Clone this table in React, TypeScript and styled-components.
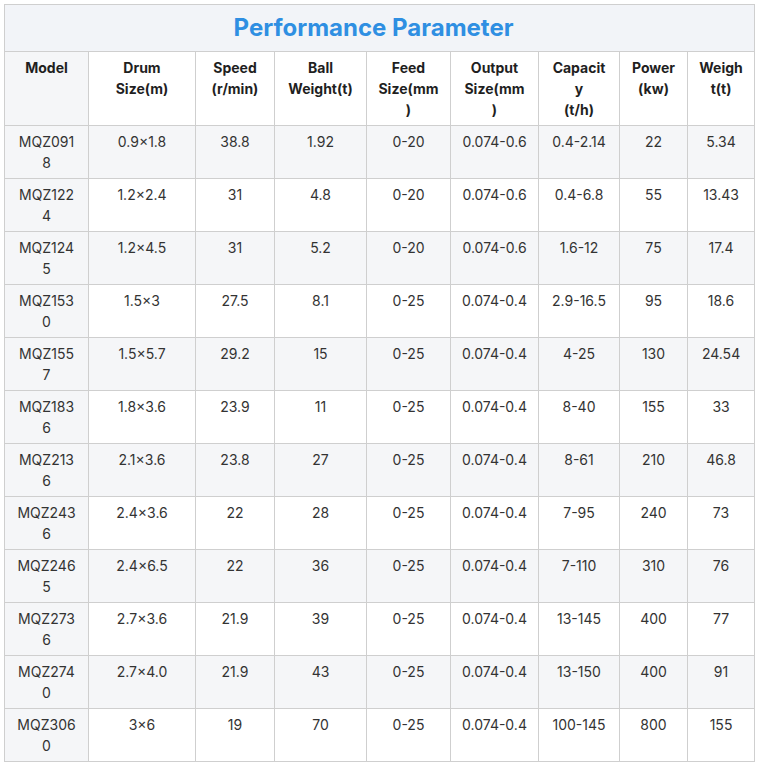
import React from "react";
import styled, { createGlobalStyle } from "styled-components";

const Global = createGlobalStyle`
  html, body { margin: 0; padding: 0; background: #ffffff; }
  body { padding: 4px; font-family: Inter, "Noto Sans", sans-serif; }
`;

const Table = styled.table`
  width: 750px;
  border-collapse: collapse;
  table-layout: fixed;
  font-family: Inter, "Noto Sans", sans-serif;
  font-size: 14px;
  line-height: 21px;
  color: #333333;
`;

const TitleCell = styled.th`
  height: 46px;
  padding: 0 12px 0 0;
  background: #f2f4f8;
  border: 1px solid #cfcfcf;
  color: #2f8fe2;
  font-size: 24px;
  font-weight: 700;
  line-height: 46px;
  text-align: center;
`;

const HeadCell = styled.th<{ $first?: boolean; $px: number }>`
  padding: 5px ${(p) => p.$px}px;
  height: 63px;
  vertical-align: top;
  text-align: center;
  font-weight: 700;
  color: #1f1f1f;
  background: ${(p) => (p.$first ? "#f5f6f8" : "#ffffff")};
  border: 1px solid #cfcfcf;
  overflow-wrap: anywhere;
`;

const Row = styled.tr<{ $shade: boolean }>`
  background: ${(p) => (p.$shade ? "#f5f6f8" : "#ffffff")};
`;

const Cell = styled.td<{ $first?: boolean; $px: number }>`
  padding: 5px ${(p) => p.$px}px;
  height: 42px;
  vertical-align: top;
  text-align: center;
  border: 1px solid #cfcfcf;
  overflow-wrap: anywhere;
  background: ${(p) => (p.$first ? "#f5f6f8" : "transparent")};
`;

const widths = [84, 107, 79, 92, 84, 88, 81, 68, 67];
const headPadX = [12, 10, 10, 10, 10, 13, 12, 10, 10];
const cellPadX = [12, 10, 10, 10, 10, 10, 10, 10, 10];

const headers: string[][] = [
  ["Model"],
  ["Drum Size(m)"],
  ["Speed", "(r/min)"],
  ["Ball Weight(t)"],
  ["Feed Size(mm)"],
  ["Output Size(mm)"],
  ["Capacity", "(t/h)"],
  ["Power", "(kw)"],
  ["Weight(t)"],
];

const rows: string[][] = [
  ["MQZ0918", "0.9×1.8", "38.8", "1.92", "0-20", "0.074-0.6", "0.4-2.14", "22", "5.34"],
  ["MQZ1224", "1.2×2.4", "31", "4.8", "0-20", "0.074-0.6", "0.4-6.8", "55", "13.43"],
  ["MQZ1245", "1.2×4.5", "31", "5.2", "0-20", "0.074-0.6", "1.6-12", "75", "17.4"],
  ["MQZ1530", "1.5×3", "27.5", "8.1", "0-25", "0.074-0.4", "2.9-16.5", "95", "18.6"],
  ["MQZ1557", "1.5×5.7", "29.2", "15", "0-25", "0.074-0.4", "4-25", "130", "24.54"],
  ["MQZ1836", "1.8×3.6", "23.9", "11", "0-25", "0.074-0.4", "8-40", "155", "33"],
  ["MQZ2136", "2.1×3.6", "23.8", "27", "0-25", "0.074-0.4", "8-61", "210", "46.8"],
  ["MQZ2436", "2.4×3.6", "22", "28", "0-25", "0.074-0.4", "7-95", "240", "73"],
  ["MQZ2465", "2.4×6.5", "22", "36", "0-25", "0.074-0.4", "7-110", "310", "76"],
  ["MQZ2736", "2.7×3.6", "21.9", "39", "0-25", "0.074-0.4", "13-145", "400", "77"],
  ["MQZ2740", "2.7×4.0", "21.9", "43", "0-25", "0.074-0.4", "13-150", "400", "91"],
  ["MQZ3060", "3×6", "19", "70", "0-25", "0.074-0.4", "100-145", "800", "155"],
];

export default function App() {
  return (
    <>
      <Global />
      <Table>
        <colgroup>
          {widths.map((w, i) => (
            <col key={i} style={{ width: w }} />
          ))}
        </colgroup>
        <thead>
          <tr>
            <TitleCell colSpan={9}>Performance Parameter</TitleCell>
          </tr>
          <tr>
            {headers.map((h, i) => (
              <HeadCell key={i} $first={i === 0} $px={headPadX[i]}>
                {h.map((line, li) => (
                  <React.Fragment key={li}>
                    {li > 0 && <br />}
                    {line}
                  </React.Fragment>
                ))}
              </HeadCell>
            ))}
          </tr>
        </thead>
        <tbody>
          {rows.map((r, ri) => (
            <Row key={r[0]} $shade={ri % 2 === 0}>
              {r.map((c, ci) => (
                <Cell key={ci} $first={ci === 0} $px={cellPadX[ci]}>
                  {c}
                </Cell>
              ))}
            </Row>
          ))}
        </tbody>
      </Table>
    </>
  );
}
